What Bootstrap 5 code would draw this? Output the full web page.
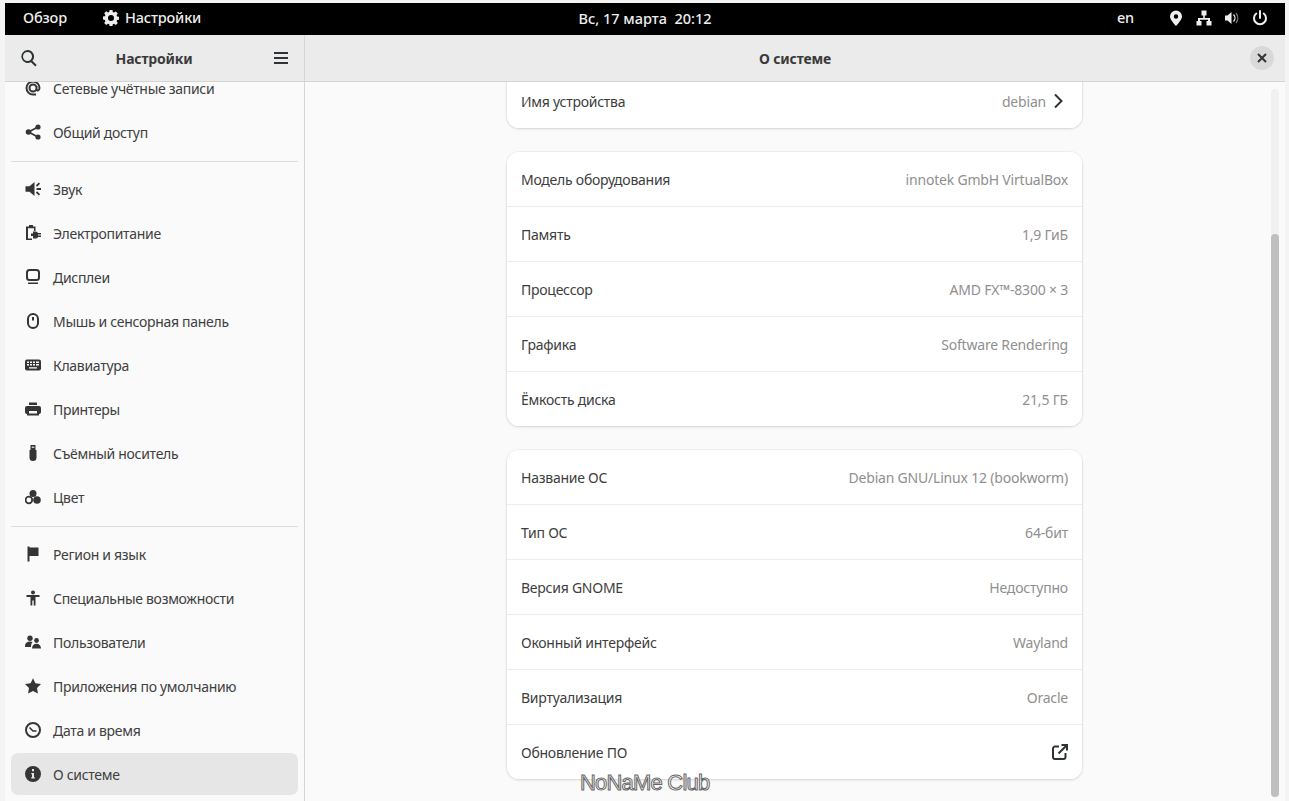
<!DOCTYPE html>
<html lang="ru"><head><meta charset="utf-8"><title>О системе</title>
<link href="https://cdn.jsdelivr.net/npm/bootstrap@5.3.0/dist/css/bootstrap.min.css" rel="stylesheet">
<style>
html,body{height:100%;overflow:hidden;background:#f4f4f4}
body{font-family:"Noto Sans","Open Sans",sans-serif;font-size:14px;color:#3d3d3d;letter-spacing:-.3px}
.desk{height:801px;padding:3px 4px 0 5px;display:flex;flex-direction:column}
.topbar{height:32px;background:#000;color:#eee;font-weight:500;font-size:14.5px;letter-spacing:-.15px;position:relative;flex:none;padding:0 17px 2px 18px}
.topbar svg{fill:#eee;display:block}
.clock{position:absolute;left:0;right:0;top:0;text-align:center;line-height:30px;white-space:pre;pointer-events:none;letter-spacing:0}
.appmenu{margin-left:36px;gap:6px}
.kbd-lang{margin-right:34px}
.win{flex:1;min-height:0;display:flex;background:#fafafa}
.side{width:300px;flex:none;border-right:1px solid #d6d6d6;display:flex;flex-direction:column;overflow:hidden}
.hbar{height:47px;flex:none;background:#ebebeb;border-bottom:1px solid #d4d4d4;position:relative;z-index:2}
.hpad{padding:0 15px}
.htitle{font-weight:700;font-size:14px;letter-spacing:-.2px;color:#3a3a3a}
.hpad .htitle{margin-right:3px}
.hbar svg{fill:#2e3436;display:block}
.slist{margin:-15px 0 0;padding:0 6px;list-style:none;flex:1}
.sitem{height:42px;margin-bottom:2px;border-radius:7px;display:flex;align-items:center;padding-left:14px;gap:12px;color:#404040}
.sitem svg{width:16px;height:16px;fill:#353535;flex:none}
.sitem.on{background:#e6e6e6}
.sdiv{height:1px;background:#dcdcdc;margin:8px 0 6px}
.main{flex:1;min-width:0;display:flex;flex-direction:column;position:relative}
.closeb{width:24px;height:24px;border-radius:50%;background:#d9d9d9;display:flex;align-items:center;justify-content:center;right:11px;top:11px}
.scroller{flex:1;min-height:0;overflow:hidden;padding:0 203px 0 202px;position:relative}
.sheet{background:#fff;border-radius:12px;box-shadow:0 0 0 1px rgba(0,0,0,.035),0 1px 3px rgba(0,0,0,.12);margin-bottom:24px;border:0;overflow:hidden}
.sheet.first{border-radius:0 0 12px 12px;margin-top:-8px}
.sheet .list-group-item{height:55px;padding:0 14px;display:flex;align-items:center;justify-content:space-between;border-color:#ececec;color:#3d3d3d;background:#fff;font-size:14px;letter-spacing:-.25px}
.sheet .list-group-item:last-child{height:54px}
.val{color:#8f8f8f;letter-spacing:-.2px}
.sheet svg{display:block;fill:none;stroke:#2e3436;stroke-width:2}
.chev{margin-left:6px;margin-right:4px}
.track{position:absolute;right:6px;top:7px;bottom:4px;width:8px;background:#f1f1f1;border-radius:4px}
.thumb{position:absolute;left:0;right:0;top:145px;bottom:0;background:#bfbfbf;border-radius:4px}
.wmark{position:absolute;left:275px;top:736px;font:400 22px/24px "Liberation Sans",sans-serif;letter-spacing:-.8px;color:#fff;-webkit-text-stroke:1px #666;z-index:3;white-space:nowrap}
</style></head><body>
<div class="desk">
 <div class="topbar d-flex align-items-center">
  <div class="clock">Вс, 17 марта  20:12</div>
  <span>Обзор</span>
  <span class="d-flex align-items-center appmenu">
   <svg width="16" height="16" viewBox="0 0 16 16"><path fill-rule="evenodd" d="M6.600 0h2.800l.4 2.100 1.200.5 1.800-1.200 2 2-1.200 1.800.5 1.200 2.100.4v2.800l-2.100.4-.5 1.200 1.200 1.800-2 2-1.800-1.200-1.200.5-.4 2.100H6.600l-.4-2.100-1.200-.5-1.800 1.200-2-2 1.200-1.800-.5-1.200L-.2 9.400V6.600l2.100-.4.5-1.200L1.200 3.200l2-2L5 2.400l1.200-.5zM8 5a3 3 0 100 6 3 3 0 000-6z"/></svg>
   <span>Настройки</span>
  </span>
  <span class="ms-auto kbd-lang">en</span>
  <span class="d-flex align-items-center" style="gap:12px">
   <svg width="16" height="16" viewBox="0 0 16 16"><path fill-rule="evenodd" d="M8 .5a6 6 0 00-6 6C2 10 8 16 8 16s6-6 6-9.500a6 6 0 00-6-6zm0 3.800a2.200 2.200 0 110 4.400 2.200 2.200 0 010-4.400z"/></svg>
   <svg width="16" height="16" viewBox="0 0 16 16"><path d="M5.500 .5h5v5H8.800v2.500H14v3h1.500v4.500h-5V11H12V9.800H4V11h1.500v4.500h-5V11H2V8h5.200V5.500H5.500z"/></svg>
   <svg width="16" height="16" viewBox="0 0 16 16"><path d="M1 5.500h2.500L7.500 2v12l-4-3.500H1z"/><path d="M9.500 4.500a5 5 0 010 7" fill="none" stroke="#eee" stroke-width="1.300"/><path d="M12 3a8 8 0 010 10" fill="none" stroke="#777" stroke-width="1.300"/></svg>
   <svg width="16" height="16" viewBox="0 0 16 16"><path d="M8 1v7" stroke="#eee" stroke-width="2" fill="none" stroke-linecap="round"/><path d="M4.300 3.500a6 6 0 107.400 0" stroke="#eee" stroke-width="2" fill="none" stroke-linecap="round"/></svg>
  </span>
 </div>
 <div class="win">
  <aside class="side">
   <div class="hbar hpad d-flex align-items-center justify-content-between">
    <svg width="18" height="18" viewBox="0 0 18 18"><path fill-rule="evenodd" d="M7.500 1a6.500 6.500 0 014.900 10.800l4.300 4.300-1.400 1.400-4.300-4.300A6.500 6.500 0 117.500 1zm0 2a4.500 4.500 0 100 9 4.500 4.500 0 000-9z"/></svg>
    <span class="htitle">Настройки</span>
    <svg width="16" height="16" viewBox="0 0 16 16"><path d="M1 2h14v2H1zM1 7h14v2H1zM1 12h14v2H1z"/></svg>
   </div>
   <ul class="slist">
    <li class="sitem"><svg viewBox="0 0 16 16"><path d="M11.500 8a3.500 3.500 0 10-7 0 3.500 3.500 0 007 0zm0-2v3.200c0 1.800 3 1.800 3-1.200A6.500 6.500 0 108 14.500h3" fill="none" stroke="#353535" stroke-width="2"/></svg>Сетевые учётные записи</li>
    <li class="sitem"><svg viewBox="0 0 16 16"><circle cx="3.500" cy="8" r="2.800"/><circle cx="13" cy="3" r="2.600"/><circle cx="13" cy="13" r="2.600"/><path d="M3.500 8L13 3M3.500 8L13 13" stroke="#353535" stroke-width="1.800"/></svg>Общий доступ</li>
    <li class="sdiv"></li>
    <li class="sitem"><svg viewBox="0 0 16 16"><path d="M9.500 1v14L4.500 10.800H.5V5.200h4z"/><path d="M11.500 5l3-2.800M11.500 8h4.500M11.500 11l3 2.800" stroke="#353535" stroke-width="1.800" fill="none"/></svg>Звук</li>
    <li class="sitem"><svg viewBox="0 0 16 16"><path d="M4 0h4v1.500h2.500V6H9V3.300H3V13.500h4V15H1V1.500h3z"/><path d="M6 8.500h2V6.500h2.500A2.500 2.500 0 0113 8h3v1.500h-3v1h3V12h-3a2.500 2.500 0 01-2.500 1.500H8v-2.500H6z"/></svg>Электропитание</li>
    <li class="sitem"><svg viewBox="0 0 16 16"><rect x="2" y="1" width="12" height="10" rx="2.500" fill="none" stroke="#353535" stroke-width="2"/><path d="M3 13.500h10V15H3z"/></svg>Дисплеи</li>
    <li class="sitem"><svg viewBox="0 0 16 16"><rect x="3" y="1" width="10" height="14" rx="5" fill="none" stroke="#353535" stroke-width="2"/><path d="M7 4h2v3.500H7z"/></svg>Мышь и сенсорная панель</li>
    <li class="sitem"><svg viewBox="0 0 16 16"><rect y="2.500" width="16" height="11" rx="2"/><path fill="#fff" d="M2 4.500h2v1.500H2zM5 4.500h2v1.500H5zM8 4.500h2v1.500H8zM11 4.500h3v1.500h-3zM2 7h2v1.500H2zM5 7h2v1.500H5zM8 7h2v1.500H8zM11 7h3v1.500h-3zM4 10.300h8v1.300H4z"/></svg>Клавиатура</li>
    <li class="sitem"><svg viewBox="0 0 16 16"><path d="M4 1.500h8V4H4z"/><path fill-rule="evenodd" d="M2 5h12a2 2 0 012 2v4a2 2 0 01-2 2v1.500H2V13a2 2 0 01-2-2V7a2 2 0 012-2zm2 5v2.500h8V10z"/></svg>Принтеры</li>
    <li class="sitem"><svg viewBox="0 0 16 16"><path fill-rule="evenodd" d="M5.500 0h5v5h1v7.500a3.500 3.500 0 01-7 0V5h1zM6.800 1.500v1.500h1V1.500zm1.500 0v1.500h1V1.500z"/></svg>Съёмный носитель</li>
    <li class="sitem"><svg viewBox="0 0 16 16"><circle cx="8" cy="4.500" r="3.500"/><circle cx="3.900" cy="11" r="3.300" fill="none" stroke="#353535" stroke-width="1.800"/><circle cx="12" cy="11" r="3.800"/></svg>Цвет</li>
    <li class="sdiv"></li>
    <li class="sitem"><svg viewBox="0 0 16 16"><path d="M2.500 .5h2v1h9v8.500h-9v5.500h-2z"/></svg>Регион и язык</li>
    <li class="sitem"><svg viewBox="0 0 16 16"><circle cx="8" cy="2.500" r="2"/><path d="M1.500 5h13v2H10.500v8.500H8.700v-5H7.300v5H5.500V7H1.500z"/></svg>Специальные возможности</li>
    <li class="sitem"><svg viewBox="0 0 16 16"><circle cx="5" cy="4.200" r="2.700"/><circle cx="11.500" cy="6.500" r="2.400"/><path d="M0 12c0-3 2-4.500 5-4.500 1 0 2 .2 2.700.6C6.500 9 6 11 6 13H0zM7 14.500c0-3 2-4.700 4.500-4.700S16 11.500 16 14.500z"/></svg>Пользователи</li>
    <li class="sitem"><svg viewBox="0 0 16 16"><path d="M8 .3l2.400 5 5.600.8-4 3.900.9 5.600L8 13l-4.900 2.600.9-5.600-4-3.900 5.600-.8z"/></svg>Приложения по умолчанию</li>
    <li class="sitem"><svg viewBox="0 0 16 16"><circle cx="8" cy="8" r="7" fill="none" stroke="#353535" stroke-width="2"/><path d="M4.500 5.500L8 9h3.500" stroke="#353535" stroke-width="1.600" fill="none"/></svg>Дата и время</li>
    <li class="sitem on"><svg viewBox="0 0 16 16"><path fill-rule="evenodd" d="M8 0a8 8 0 110 16A8 8 0 018 0zM7 3v2.200h2V3zM6.300 7v1.300H7v3H6.200v1.300h3.600v-1.300H9V7z"/></svg>О системе</li>
   </ul>
  </aside>
  <main class="main">
   <div class="hbar d-flex align-items-center justify-content-center">
    <span class="htitle">О системе</span>
    <span class="closeb position-absolute"><svg width="10" height="10" viewBox="0 0 10 10"><path d="M1 1l8 8M9 1l-8 8" stroke="#2e3436" stroke-width="2"/></svg></span>
   </div>
   <div class="scroller">
    <div class="card sheet first"><div class="list-group list-group-flush">
     <div class="list-group-item"><span>Имя устройства</span><span class="d-flex align-items-center val">debian<svg class="chev" width="12" height="16" viewBox="0 0 12 16"><path d="M3 1.500L9.500 8 3 14.500"/></svg></span></div>
    </div></div>
    <div class="card sheet"><div class="list-group list-group-flush">
     <div class="list-group-item"><span>Модель оборудования</span><span class="val">innotek GmbH VirtualBox</span></div>
     <div class="list-group-item"><span>Память</span><span class="val">1,9 ГиБ</span></div>
     <div class="list-group-item"><span>Процессор</span><span class="val">AMD FX™-8300 × 3</span></div>
     <div class="list-group-item"><span>Графика</span><span class="val">Software Rendering</span></div>
     <div class="list-group-item"><span>Ёмкость диска</span><span class="val">21,5 ГБ</span></div>
    </div></div>
    <div class="card sheet"><div class="list-group list-group-flush">
     <div class="list-group-item"><span>Название ОС</span><span class="val">Debian GNU/Linux 12 (bookworm)</span></div>
     <div class="list-group-item"><span>Тип ОС</span><span class="val">64-бит</span></div>
     <div class="list-group-item"><span>Версия GNOME</span><span class="val">Недоступно</span></div>
     <div class="list-group-item"><span>Оконный интерфейс</span><span class="val">Wayland</span></div>
     <div class="list-group-item"><span>Виртуализация</span><span class="val">Oracle</span></div>
     <div class="list-group-item"><span>Обновление ПО</span><svg width="16" height="16" viewBox="0 0 16 16"><path d="M7 2.500H3a2 2 0 00-2 2V13a2 2 0 002 2h8.500a2 2 0 002-2V9M6.500 9.500L15 1M9.500 1H15v5.500"/></svg></div>
    </div></div>
    <div class="track"><div class="thumb"></div></div>
   </div>
   <div class="wmark">NoNaMe Club</div>
  </main>
 </div>
</div>
<script src="https://cdn.jsdelivr.net/npm/bootstrap@5.3.0/dist/js/bootstrap.bundle.min.js"></script>
</body></html>
